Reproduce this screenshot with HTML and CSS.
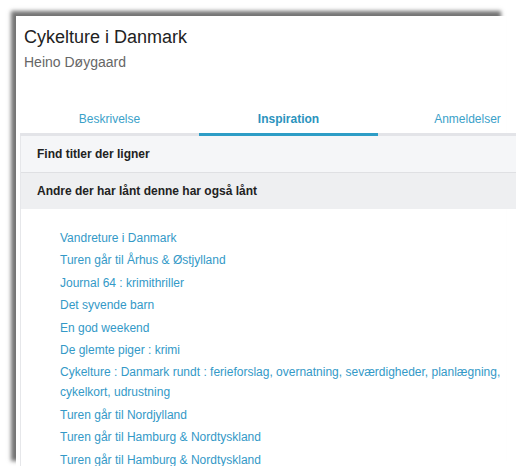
FILE: index.html
```html
<!DOCTYPE html>
<html>
  <head>
    <title>Cykelture i Danmark</title>
    <link rel="stylesheet" href="styles.css">
  </head>

  <body>
    <div class="frame">
      <!-- Work header -->
      <div class="work-Header">
        <p class="work-Title">Cykelture i Danmark</p>
        <p class="work-Author">Heino Døygaard</p>
      </div>

      <!-- Tabs -->
      <div class="tabs">
        <a class="tab">Beskrivelse</a>
        <a class="tab tab-Active">Inspiration</a>
        <a class="tab">Anmeldelser</a>
      </div>

      <div class="panel">
        <div class="panel-Row">Find titler der ligner</div>
        <div class="panel-Row panel-Row-Open">Andre der har lånt denne har også lånt</div>

        <ul class="loans">
          <li><a href="#">Vandreture i Danmark</a></li>
          <li><a href="#">Turen går til Århus &amp; Østjylland</a></li>
          <li><a href="#">Journal 64 : krimithriller</a></li>
          <li><a href="#">Det syvende barn</a></li>
          <li><a href="#">En god weekend</a></li>
          <li><a href="#">De glemte piger : krimi</a></li>
          <li><a href="#">Cykelture : Danmark rundt : ferieforslag, overnatning, seværdigheder, planlægning, cykelkort, udrustning</a></li>
          <li><a href="#">Turen går til Nordjylland</a></li>
          <li><a href="#">Turen går til Hamburg &amp; Nordtyskland</a></li>
          <li><a href="#">Turen går til Hamburg &amp; Nordtyskland</a></li>
        </ul>
      </div>
    </div>
  </body>
</html>
```

FILE: styles.css
```css
/* Work page, inspiration tab */
body{
  margin: 0;
  overflow: hidden;
  background-color: white;
  font-family: "Liberation Sans", Arial, sans-serif;
}

.frame{
  /* Window area with the drop shadow on top and left */
  margin: 16px 0 0 16px;
  width: 490px;
  height: 450px;
  box-shadow: -5px -5px 4px rgba(0, 0, 0, 0.55);
}

.work-Header{
  padding: 10px 8px 0 8px;
  height: 85px;
}

.work-Title{
  margin: 0;
  font-size: 18px;
  line-height: 22px;
  color: #222;
}

.work-Author{
  margin: 5px 0 0 0;
  font-size: 14px;
  line-height: 18px;
  color: #666;
}

.tabs{
  display: flex;
  width: 537px;
  margin-left: 4px;
  border-bottom: 3px solid #e3e4e8;
}

.tab{
  /* Each tab takes a third */
  flex: 1;
  text-align: center;
  font-size: 12px;
  line-height: 16px;
  padding-bottom: 6px;
  margin-bottom: -3px;
  color: #3aa1c9;
  border-bottom: 3px solid transparent;
}

.tab-Active{
  font-weight: bold;
  color: #2b93bd;
  border-bottom-color: #2d9dc6;
}

.panel{
  width: 520px;
  margin-left: 4px;
  border-left: 1px solid #e6e7ea;
  height: 400px;
}

.panel-Row{
  /* Accordion headers */
  height: 36px;
  line-height: 36px;
  padding-left: 16px;
  font-size: 12px;
  font-weight: bold;
  color: #222;
  background-color: #f5f6f8;
  border-bottom: 1px solid #dfe0e3;
}

.panel-Row-Open{
  background-color: #eeeff1;
  border-bottom: none;
}

.loans{
  list-style: none;
  margin: 0;
  padding: 19px 0 0 39px;
  width: 450px;
}

.loans li{
  font-size: 12px;
  line-height: 20px;
  margin-bottom: 2.4px;
}

.loans a{
  color: #3399c7;
  text-decoration: none;
}
```
